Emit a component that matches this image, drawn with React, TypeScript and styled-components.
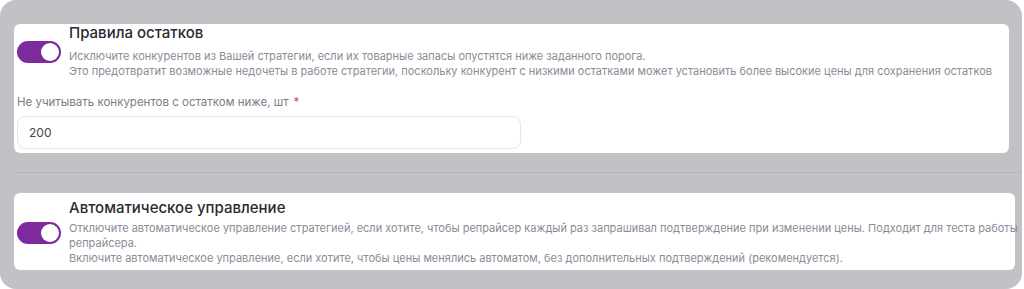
import React from "react";
import styled, { createGlobalStyle } from "styled-components";

const Global = createGlobalStyle`
  html, body { margin: 0; padding: 0; background: #ffffff; }
  body { font-family: Inter, "Noto Sans", sans-serif; }
`;

const Panel = styled.div`
  width: 1022px;
  height: 289px;
  box-sizing: border-box;
  background: #c1c2c6;
  border-radius: 16px;
  padding: 24px 13px 0 14px;
  display: flex;
  flex-direction: column;
  overflow: hidden;
`;

const Card = styled.section<{ $extend?: number; $pad: string }>`
  background: #ffffff;
  border-radius: 6px;
  margin-right: ${(p) => -(p.$extend ?? 0)}px;
  padding: ${(p) => p.$pad};
  display: flex;
  flex-direction: column;
`;

const Row = styled.div`
  display: flex;
  align-items: center;
  gap: 8px;
`;

const Toggle = styled.div`
  flex: none;
  width: 44px;
  height: 22px;
  border-radius: 11px;
  background: #7d2a9e;
  position: relative;
  &::after {
    content: "";
    position: absolute;
    right: 2px;
    top: 2px;
    width: 18px;
    height: 18px;
    border-radius: 50%;
    background: #ffffff;
  }
`;

const TextCol = styled.div<{ $w?: number }>`
  display: flex;
  flex-direction: column;
  min-width: 0;
  ${(p) => (p.$w ? `width: ${p.$w}px; flex: none;` : "")}
`;

const Title = styled.h3`
  margin: 0;
  font-size: 15px;
  line-height: 18px;
  font-weight: 500;
  color: #2a2a30;
`;

const Desc = styled.p<{ $gap: number }>`
  margin: ${(p) => p.$gap}px 0 0;
  font-size: 11px;
  line-height: 15px;
  color: #8b8b97;
  white-space: pre-line;
`;

const Label = styled.label`
  margin-top: 16px;
  font-size: 11.5px;
  line-height: 14px;
  color: #7c7c86;
  span {
    color: #e5484d;
    margin-left: 5px;
  }
`;

const Input = styled.div`
  margin-top: 7px;
  width: 504px;
  height: 33px;
  box-sizing: border-box;
  border: 1px solid #e6e6ea;
  border-radius: 8px;
  padding: 0 11px;
  display: flex;
  align-items: center;
  font-size: 12px;
  color: #45454d;
`;

const Divider = styled.hr`
  border: none;
  height: 1px;
  background: #b4b5b9;
  margin: 19px -13px 20px 0;
`;

export default function App() {
  return (
    <>
      <Global />
      <Panel>
        <Card $pad="0 0 4px 3px">
          <Row>
            <Toggle />
            <TextCol>
              <Title>Правила остатков</Title>
              <Desc $gap={7}>
                {"Исключите конкурентов из Вашей стратегии, если их товарные запасы опустятся ниже заданного порога.\nЭто предотвратит возможные недочеты в работе стратегии, поскольку конкурент с низкими остатками может установить более высокие цены для сохранения остатков"}
              </Desc>
            </TextCol>
          </Row>
          <Label>
            Не учитывать конкурентов с остатком ниже, шт<span>*</span>
          </Label>
          <Input>200</Input>
        </Card>
        <Divider />
        <Card $extend={6} $pad="6px 0 4px 3px">
          <Row>
            <Toggle />
            <TextCol $w={962}>
              <Title>Автоматическое управление</Title>
              <Desc $gap={4}>
                {"Отключите автоматическое управление стратегией, если хотите, чтобы репрайсер каждый раз запрашивал подтверждение при изменении цены. Подходит для теста работы репрайсера.\nВключите автоматическое управление, если хотите, чтобы цены менялись автоматом, без дополнительных подтверждений (рекомендуется)."}
              </Desc>
            </TextCol>
          </Row>
        </Card>
      </Panel>
    </>
  );
}
